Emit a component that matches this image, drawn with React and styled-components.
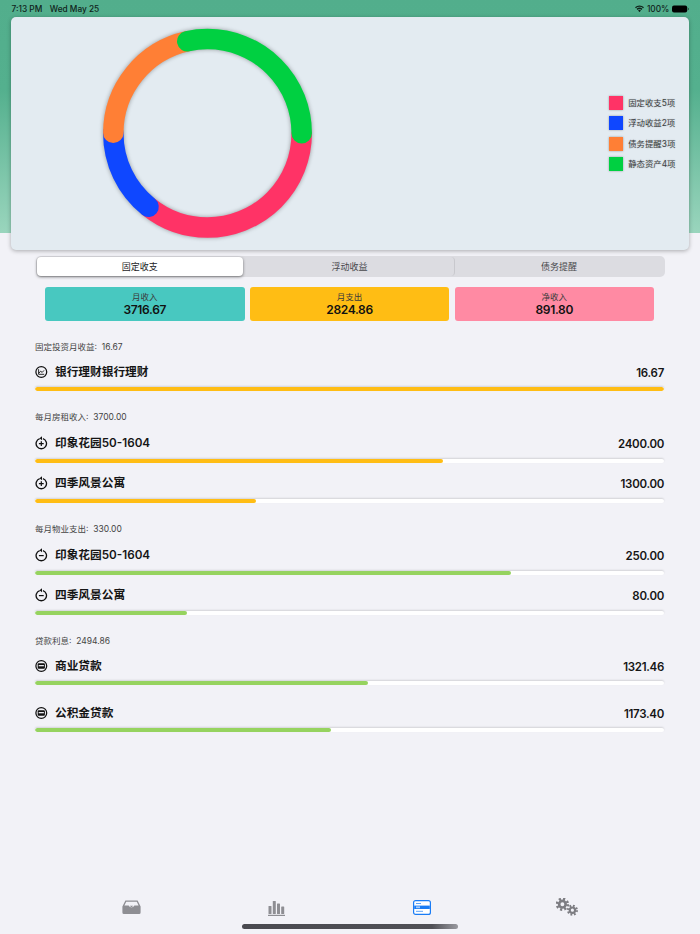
import React from 'react';
import styled, { createGlobalStyle } from 'styled-components';

const GlobalStyle = createGlobalStyle`
  html, body {
    margin: 0;
    padding: 0;
    background: #f2f2f7;
    font-family: Inter, "Noto Sans CJK SC", sans-serif;
  }
`;

const Page = styled.div`
  width: 700px;
  height: 934px;
  overflow: hidden;
  display: flex;
  flex-direction: column;
  background: linear-gradient(#52ae8c 0, #54b08e 90px, #9ad5bd 233px, #f2f2f7 233px);
`;

const StatusBar = styled.div`
  height: 17px;
  flex: none;
  padding: 0 10.7px 0 11.5px;
  display: flex;
  align-items: center;
  justify-content: space-between;
  font-size: 8.3px;
  font-weight: 500;
  color: #10231b;
`;

const StatusGroup = styled.div`
  display: flex;
  align-items: center;
  gap: ${p => p.$gap}px;
`;

const ChartCard = styled.div`
  flex: none;
  height: 233px;
  margin: 0 11px;
  padding: 0 13.5px 0 80px;
  display: flex;
  align-items: center;
  justify-content: space-between;
  background: #e3ebf1;
  border-radius: 5px;
  box-shadow: 0 1px 4px rgba(0, 0, 0, 0.3);
`;

const Donut = styled.svg`
  width: 233px;
  height: 233px;
  filter: drop-shadow(0 0 2px rgba(0, 0, 0, 0.35));
`;

const Legend = styled.div`
  display: flex;
  flex-direction: column;
  gap: 6.4px;
`;

const LegendItem = styled.div`
  display: flex;
  align-items: center;
  gap: 5px;
  font-size: 8.4px;
  line-height: 14px;
  color: #3c3f42;
  text-shadow: 0 0 2px rgba(0, 0, 0, 0.2);
`;

const Swatch = styled.span`
  width: 14px;
  height: 14px;
  background: ${p => p.$color};
  box-shadow: 0 0 2px rgba(0, 0, 0, 0.35);
`;

const Segmented = styled.div`
  flex: none;
  margin: 5.5px 35.5px 0;
  height: 21.5px;
  padding: 1.5px 1px;
  box-sizing: border-box;
  display: grid;
  grid-template-columns: repeat(3, 1fr);
  background: #dcdce1;
  border-radius: 5px;
`;

const Segment = styled.div`
  display: flex;
  align-items: center;
  justify-content: center;
  font-size: 9px;
  color: ${p => (p.$active ? '#1c1c1e' : '#48484c')};
  background: ${p => (p.$active ? '#fff' : 'transparent')};
  border-radius: 4px;
  margin-right: ${p => (p.$active ? '2.5px' : '0')};
  box-shadow: ${p => (p.$active ? '0 1px 3px rgba(0, 0, 0, 0.5)' : 'none')};
  border-right: ${p => (p.$divider ? '1px solid #c8c8cd' : 'none')};
`;

const Stats = styled.div`
  flex: none;
  margin: 10px 45px 0;
  display: grid;
  grid-template-columns: repeat(3, 199.5px);
  gap: 5.25px;
`;

const Stat = styled.div`
  height: 34px;
  display: flex;
  flex-direction: column;
  align-items: center;
  justify-content: center;
  background: ${p => p.$color};
  border-radius: 3px;
  color: #111;
`;

const StatLabel = styled.div`
  font-size: 8.5px;
  line-height: 11px;
  color: #3a3a3a;
`;

const StatValue = styled.div`
  font-size: 12px;
  line-height: 13px;
  font-weight: 600;
  letter-spacing: -0.35px;
`;

const List = styled.div`
  flex: none;
  margin: 20px 36px 0 35px;
`;

const SectionLabel = styled.div`
  height: 12px;
  line-height: 12px;
  font-size: 8.5px;
  color: #444;
  white-space: pre;
  margin-top: ${p => p.$top}px;
`;

const RowHead = styled.div`
  height: 16px;
  display: flex;
  align-items: center;
  margin-top: ${p => p.$top}px;
  font-size: 11.7px;
  line-height: 16px;
  font-weight: 600;
  color: #151515;
`;

const RowIcon = styled.svg`
  width: 13px;
  height: 14px;
  margin: 0 6.6px 0 0.4px;
`;

const RowValue = styled.span`
  margin-left: auto;
  margin-top: 1px;
  font-weight: 600;
  font-size: 11.5px;
  letter-spacing: -0.3px;
`;

const Track = styled.div`
  height: 4px;
  margin-top: ${p => p.$top}px;
  background: #fff;
  border-radius: 2px;
  box-shadow: 0 -1px 2px rgba(0, 0, 0, 0.13);
  overflow: hidden;
`;

const Fill = styled.div`
  height: 100%;
  background: ${p => p.$color};
  border-radius: 2px;
`;

const TabBar = styled.div`
  margin-top: auto;
  flex: none;
  padding-left: 59px;
  display: grid;
  grid-template-columns: repeat(4, 145px);
  align-items: center;
  justify-items: center;
`;

const TabIcon = styled.svg`
  display: block;
  width: ${p => p.$w}px;
  height: ${p => p.$h}px;
  align-self: ${p => p.$align || 'center'};
`;

const HomeBar = styled.div`
  flex: none;
  width: 216px;
  height: 4.5px;
  margin: 8px auto 5.5px;
  border-radius: 3px;
  background: linear-gradient(90deg, #4a4a50, #505056 88%, #9a9aa0);
`;

const RED = '#ff3366';
const BLUE = '#0f47ff';
const ORANGE = '#ff7f35';
const GREEN = '#00d041';
const AMBER = '#ffbd14';
const LIME = '#96d35f';

const legend = [
  { color: RED, text: '固定收支5项', count: 5 },
  { color: BLUE, text: '浮动收益2项', count: 2 },
  { color: ORANGE, text: '债务提醒3项', count: 3 },
  { color: GREEN, text: '静态资产4项', count: 4 },
];

const sections = [
  {
    label: '固定投资月收益:  16.67',
    top: 0,
    rows: [{ icon: 'chart', name: '银行理财银行理财', value: '16.67', pct: 100, color: AMBER, top: 11, gap: 7 }],
  },
  {
    label: '每月房租收入:  3700.00',
    top: 20,
    rows: [
      { icon: 'plus', name: '印象花园50-1604', value: '2400.00', pct: 64.9, color: AMBER, top: 12, gap: 8 },
      { icon: 'plus', name: '四季风景公寓', value: '1300.00', pct: 35.1, color: AMBER, top: 12, gap: 8 },
    ],
  },
  {
    label: '每月物业支出:  330.00',
    top: 20,
    rows: [
      { icon: 'minus', name: '印象花园50-1604', value: '250.00', pct: 75.7, color: LIME, top: 12, gap: 8 },
      { icon: 'minus', name: '四季风景公寓', value: '80.00', pct: 24.2, color: LIME, top: 12, gap: 8 },
    ],
  },
  {
    label: '贷款利息:  2494.86',
    top: 20,
    rows: [
      { icon: 'card', name: '商业贷款', value: '1321.46', pct: 52.97, color: LIME, top: 11, gap: 7 },
      { icon: 'card', name: '公积金贷款', value: '1173.40', pct: 47.03, color: LIME, top: 20, gap: 7 },
    ],
  },
];

function DonutChart() {
  const r = 94.2;
  const c = 2 * Math.PI * r;
  const total = legend.reduce((sum, s) => sum + s.count, 0);
  let start = 0;
  return (
    <Donut viewBox="0 0 233 233">
      {legend.map(s => {
        const len = (s.count / total) * c;
        const seg = (
          <circle
            key={s.color}
            cx="116.5"
            cy="116.3"
            r={r}
            fill="none"
            stroke={s.color}
            strokeWidth="20.5"
            strokeLinecap="round"
            strokeDasharray={`${len} ${c - len}`}
            strokeDashoffset={-start}
          />
        );
        start += len;
        return seg;
      })}
    </Donut>
  );
}

// 列表左侧的小圆形图标
function ItemIcon({ type }) {
  const timer = type === 'plus' || type === 'minus';
  return (
    <RowIcon viewBox="0 0 13 14">
      {timer ? (
        <>
          <path d="M4.7 2.6A5.2 5.2 0 1 0 7.9 2.6" fill="none" stroke="#111" strokeWidth="1.3" />
          <path d="M7 0.3V4.3L4.5 2.3Z" fill="#111" />
        </>
      ) : (
        <circle cx="6.3" cy="7" r="5.4" fill="none" stroke="#111" strokeWidth="1.25" />
      )}
      {type === 'chart' && (
        <path d="M3.6 4.2V9.3H9.2M3.9 8.2L5.6 6.2L7.2 7.4L9 5.4" fill="none" stroke="#111" strokeWidth="0.9" />
      )}
      {type === 'plus' && <path d="M3.9 7.6H8.7M6.3 5.2V10" stroke="#111" strokeWidth="1.2" />}
      {type === 'minus' && <path d="M3.9 7.6H8.7" stroke="#111" strokeWidth="1.2" />}
      {type === 'card' && (
        <>
          <rect x="2.7" y="4.2" width="7.2" height="5.6" rx="1" fill="#111" />
          <rect x="3.7" y="6" width="5.2" height="1.3" fill="#e8e8ee" />
        </>
      )}
    </RowIcon>
  );
}

function InboxIcon() {
  return (
    <TabIcon $w={19} $h={14} viewBox="0 0 19 14">
      <path d="M3.4 0.5h12.2L18.6 6.5V12.5a1.5 1.5 0 0 1-1.5 1.5H1.9a1.5 1.5 0 0 1-1.5-1.5V6.5Z" fill="#8e8e93" />
      <path d="M4.2 1.7h10.6L16.6 5.6H12.4a3 2.4 0 0 1-5.8 0H2.4Z" fill="#f2f2f7" />
      <path d="M7.8 5.8h3.4L9.5 7.4Z" fill="#8e8e93" />
    </TabIcon>
  );
}

function BarsIcon() {
  return (
    <TabIcon $w={17} $h={15} $align="end" viewBox="0 0 17 15">
      <g fill="#8e8e93">
        <rect x="0.5" y="5" width="3" height="8" rx="0.6" />
        <rect x="4.8" y="0" width="3" height="13" rx="0.6" />
        <rect x="9" y="2.5" width="3" height="10.5" rx="0.6" />
        <rect x="13.2" y="5.5" width="3" height="7.5" rx="0.6" />
        <rect x="0" y="13.8" width="17" height="1.2" />
      </g>
    </TabIcon>
  );
}

function CardIcon() {
  return (
    <TabIcon $w={18} $h={15} viewBox="0 0 18 15">
      <rect x="0.6" y="0.6" width="16.8" height="13.8" rx="2" fill="#fff" stroke="#1a7cf5" strokeWidth="1.2" />
      <rect x="3" y="3" width="5" height="1" fill="#5fa4f7" />
      <rect x="1.2" y="5.6" width="15.6" height="3.4" fill="#1a7cf5" />
      <rect x="3" y="6.4" width="4" height="1.8" fill="#a9cdfa" />
      <rect x="3" y="10.8" width="7" height="1" fill="#5fa4f7" />
    </TabIcon>
  );
}

function Gear({ cx, cy, r, teeth }) {
  const tc = 2 * Math.PI * (r + 0.6);
  const dash = tc / teeth / 2;
  return (
    <>
      <circle cx={cx} cy={cy} r={r + 0.6} fill="none" stroke="#7d7d82" strokeWidth={r * 0.55} strokeDasharray={`${dash} ${dash}`} />
      <circle cx={cx} cy={cy} r={r * 0.68} fill="none" stroke="#7d7d82" strokeWidth={r * 0.55} />
    </>
  );
}

function GearsIcon() {
  return (
    <TabIcon $w={22} $h={18} viewBox="0 0 22 18">
      <Gear cx={6.4} cy={6.2} r={4.8} teeth={8} />
      <Gear cx={16.4} cy={12.2} r={3.9} teeth={8} />
    </TabIcon>
  );
}

function WifiIcon() {
  return (
    <svg width="9" height="7.5" viewBox="0 0 10 8">
      <path d="M5 7.8L3.4 6a2.2 2.2 0 0 1 3.2 0ZM2.8 5.3L1.7 4.1a4.7 4.7 0 0 1 6.6 0L7.2 5.3a3.2 3.2 0 0 0-4.4 0ZM1 3.4L0 2.3a7.2 7.2 0 0 1 10 0L9 3.4a5.7 5.7 0 0 0-8 0Z" fill="#10231b" />
    </svg>
  );
}

function BatteryIcon() {
  return (
    <svg width="17" height="8" viewBox="0 0 17 8">
      <rect x="0" y="0.4" width="15.2" height="7.2" rx="2" fill="#000" />
      <path d="M15.8 2.7a1.3 1.3 0 0 1 0 2.6Z" fill="#2c5a48" />
    </svg>
  );
}

export default function App() {
  return (
    <Page>
      <GlobalStyle />
      <StatusBar>
        <StatusGroup $gap={7.5}>
          <span>7:13 PM</span>
          <span>Wed May 25</span>
        </StatusGroup>
        <StatusGroup $gap={3}>
          <WifiIcon />
          <span>100%</span>
          <BatteryIcon />
        </StatusGroup>
      </StatusBar>

      <ChartCard>
        <DonutChart />
        <Legend>
          {legend.map(item => (
            <LegendItem key={item.text}>
              <Swatch $color={item.color} />
              {item.text}
            </LegendItem>
          ))}
        </Legend>
      </ChartCard>

      <Segmented>
        <Segment $active>固定收支</Segment>
        <Segment $divider>浮动收益</Segment>
        <Segment>债务提醒</Segment>
      </Segmented>

      <Stats>
        <Stat $color="#48c8c0">
          <StatLabel>月收入</StatLabel>
          <StatValue>3716.67</StatValue>
        </Stat>
        <Stat $color={AMBER}>
          <StatLabel>月支出</StatLabel>
          <StatValue>2824.86</StatValue>
        </Stat>
        <Stat $color="#ff8aa3">
          <StatLabel>净收入</StatLabel>
          <StatValue>891.80</StatValue>
        </Stat>
      </Stats>

      <List>
        {sections.map(section => (
          <div key={section.label}>
            <SectionLabel $top={section.top}>{section.label}</SectionLabel>
            {section.rows.map(row => (
              <div key={row.name}>
                <RowHead $top={row.top}>
                  <ItemIcon type={row.icon} />
                  <span>{row.name}</span>
                  <RowValue>{row.value}</RowValue>
                </RowHead>
                <Track $top={row.gap}>
                  <Fill $color={row.color} style={{ width: `${row.pct}%` }} />
                </Track>
              </div>
            ))}
          </div>
        ))}
      </List>

      <TabBar>
        <InboxIcon />
        <BarsIcon />
        <CardIcon />
        <GearsIcon />
      </TabBar>
      <HomeBar />
    </Page>
  );
}
